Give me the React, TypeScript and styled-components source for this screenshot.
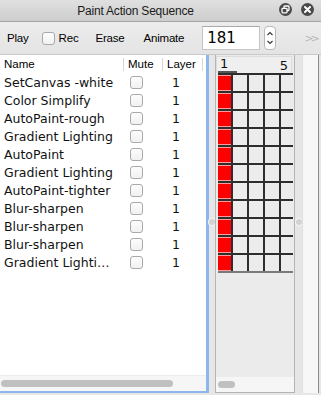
import React from "react";
import styled, { createGlobalStyle } from "styled-components";

const Global = createGlobalStyle`
  html, body { margin: 0; padding: 0; }
  body { font-family: "DejaVu Sans", "Liberation Sans", sans-serif; background: #e8e8e8; }
`;

const Window = styled.div`
  width: 321px;
  height: 395px;
  display: flex;
  flex-direction: column;
  background: #e6e6e6;
  overflow: hidden;
  color: #111;
`;

const TitleBar = styled.div`
  height: 21px;
  flex: none;
  display: flex;
  align-items: center;
  position: relative;
  background: linear-gradient(#e0e0e0, #cdcdcd);
  border-bottom: 1px solid #a5a5a5;
`;

const Title = styled.div`
  flex: 1;
  text-align: center;
  font-family: "Liberation Sans", Arial, sans-serif;
  font-size: 12px;
  letter-spacing: -0.2px;
  color: #1a1a1a;
  padding-right: 50px;
`;

const TitleIcons = styled.div`
  position: absolute;
  right: 7px;
  top: 3px;
  display: flex;
  gap: 9px;
`;

const Toolbar = styled.div`
  height: 32px;
  flex: none;
  display: flex;
  align-items: center;
  padding-left: 7px;
  font-family: "Liberation Sans", Arial, sans-serif;
  font-size: 11.5px;
  letter-spacing: -0.2px;
  color: #000;
  background: linear-gradient(#ececec, #e4e4e4);
  border-bottom: 1px solid #c9c9c9;
`;

const ToolItem = styled.span<{ $ml?: number }>`
  margin-left: ${(p) => p.$ml ?? 0}px;
  white-space: nowrap;
`;

const Check = styled.span<{ $ml?: number }>`
  display: inline-block;
  box-sizing: border-box;
  width: 13px;
  height: 13px;
  margin-left: ${(p) => p.$ml ?? 0}px;
  border: 1px solid #a9a9a9;
  border-radius: 3px;
  background: linear-gradient(#fdfdfd, #f1f1f1);
  flex: none;
`;

const NumberBox = styled.div`
  box-sizing: border-box;
  margin-left: 18px;
  width: 58px;
  height: 24px;
  background: #fff;
  border: 1px solid #c4c4c4;
  border-top-color: #a9a9a9;
  font-family: "DejaVu Sans", sans-serif;
  font-size: 15px;
  letter-spacing: 0;
  padding-left: 4px;
  display: flex;
  align-items: center;
`;

const Stepper = styled.div`
  box-sizing: border-box;
  margin-left: 4px;
  width: 12px;
  height: 24px;
  background: #fff;
  border: 1px solid #b8b8b8;
  border-radius: 4px;
  display: flex;
  align-items: center;
  justify-content: center;
`;

const More = styled.span`
  margin-left: auto;
  margin-right: 4px;
  color: #b8b8b8;
  font-family: "DejaVu Sans", sans-serif;
  font-size: 11px;
  letter-spacing: -3px;
`;

const Main = styled.div`
  flex: 1;
  display: flex;
  padding-bottom: 2px;
  min-height: 0;
`;

const LeftPanel = styled.div`
  width: 206px;
  flex: none;
  display: flex;
  flex-direction: column;
  background: #fff;
  border-right: 3px solid #8db7ea;
  border-bottom: 2px solid #8db7ea;
`;

const TableGrid = styled.div`
  display: grid;
  grid-template-columns: 123px 39px 41px;
  font-size: 12.5px;
`;

const HeadCell = styled.div<{ $divider?: boolean }>`
  height: 18px;
  display: flex;
  align-items: center;
  padding-left: ${(p) => (p.$divider ? 5 : 4)}px;
  font-family: "Liberation Sans", Arial, sans-serif;
  font-size: 11.5px;
  color: #000;
  position: relative;
  &::before {
    content: "";
    display: ${(p) => (p.$divider ? "block" : "none")};
    position: absolute;
    left: 0;
    top: 3px;
    height: 13px;
    width: 1px;
    background: #d6d6d6;
  }
`;

const HeadEnd = styled.div`
  grid-column: 3;
  position: relative;
  &::after {
    content: "";
    position: absolute;
    right: 0;
    top: -15px;
    height: 13px;
    width: 1px;
    background: #d6d6d6;
  }
`;

const Cell = styled.div<{ $pl?: number }>`
  height: 18px;
  display: flex;
  align-items: center;
  padding-left: ${(p) => p.$pl ?? 4}px;
  white-space: nowrap;
  overflow: hidden;
`;

const Spacer = styled.div`
  flex: 1;
`;

const HScroll = styled.div<{ $thumb: number }>`
  height: 15px;
  flex: none;
  background: #f6f6f6;
  border-top: 1px solid #ececec;
  display: flex;
  align-items: center;
  padding-left: ${(p) => (p.$thumb > 100 ? 1 : 2)}px;
`;

const Thumb = styled.div`
  height: 7px;
  border-radius: 4px;
  background: #c0c0c0;
`;

const Splitter = styled.div<{ $w: number }>`
  width: ${(p) => p.$w}px;
  flex: none;
  display: flex;
  align-items: center;
  justify-content: center;
  padding-bottom: 4px;
`;

const Knob = styled.div`
  width: 6px;
  height: 6px;
  border-radius: 50%;
  background: #d2d2d2;
  box-shadow: 0 0 0 1px #f4f4f4;
`;

const RightPanel = styled.div`
  width: 78px;
  flex: none;
  display: flex;
  flex-direction: column;
  background: #ebebeb;
  border-left: 1px solid #b4b4b4;
  border-right: 1px solid #b4b4b4;
  border-bottom: 1px solid #b4b4b4;
`;

const RulerHead = styled.div`
  height: 16px;
  margin: 1px 2px 0 0;
  display: flex;
  justify-content: space-between;
  align-items: flex-end;
  font-size: 13px;
  line-height: 14px;
  padding: 0 3px 0 3px;
  background: #efefef;
  border: 1px solid #dcdcdc;
  border-bottom: none;
`;

const RulerOne = styled.span`
  border-bottom: 2px solid #555;
  padding-right: 9px;
  margin-left: -2px;
  padding-left: 2px;
`;

const Grid = styled.div`
  margin-left: 2px;
  width: 75px;
  display: grid;
  grid-template-columns: 13px 14px 14px 14px 12px;
  grid-auto-rows: 16px;
  gap: 2px;
  padding-top: 2px;
  background: #2e2e2e;
  border-bottom: 2px solid #7a7a7a;
`;

const GridCell = styled.div<{ $on?: boolean }>`
  background: ${(p) => (p.$on ? "#ff0000" : "#ececec")};
  box-shadow: ${(p) => (p.$on ? "inset 0 1px 0 #ff9a9a, inset 0 -1px 0 #ff9a9a" : "none")};
`;

const FarPanel = styled.div`
  width: 15px;
  flex: none;
  background: #f7f7f7;
  border-left: 1px solid #dedede;
  border-right: 1px solid #8a8a8a;
`;

const rows = [
  "SetCanvas -white",
  "Color Simplify",
  "AutoPaint-rough",
  "Gradient Lighting",
  "AutoPaint",
  "Gradient Lighting",
  "AutoPaint-tighter",
  "Blur-sharpen",
  "Blur-sharpen",
  "Blur-sharpen",
  "Gradient Lighti\u2026",
];

const RestoreIcon = () => (
  <svg width="13" height="13" viewBox="0 0 13 13">
    <circle cx="6.5" cy="6.5" r="6.5" fill="#4a4a4a" />
    <rect x="5" y="3" width="5" height="4.5" rx="0.8" fill="none" stroke="#fff" strokeWidth="1.3" />
    <rect x="3" y="5.3" width="5" height="4.5" rx="0.8" fill="#4a4a4a" stroke="#fff" strokeWidth="1.3" />
  </svg>
);

const CloseIcon = () => (
  <svg width="13" height="13" viewBox="0 0 13 13">
    <circle cx="6.5" cy="6.5" r="6.5" fill="#4a4a4a" />
    <path d="M4 4 L9 9 M9 4 L4 9" stroke="#fff" strokeWidth="2" strokeLinecap="round" />
  </svg>
);

const StepIcon = () => (
  <svg width="8" height="18" viewBox="0 0 8 18">
    <path d="M1.5 6 L4 3.5 L6.5 6 M1.5 12 L4 14.5 L6.5 12" fill="none" stroke="#333" strokeWidth="1.1" />
  </svg>
);

export default function App() {
  return (
    <Window>
      <Global />
      <TitleBar>
        <Title>Paint Action Sequence</Title>
        <TitleIcons>
          <RestoreIcon />
          <CloseIcon />
        </TitleIcons>
      </TitleBar>
      <Toolbar>
        <ToolItem>Play</ToolItem>
        <Check $ml={13} />
        <ToolItem $ml={4}>Rec</ToolItem>
        <ToolItem $ml={17}>Erase</ToolItem>
        <ToolItem $ml={19}>Animate</ToolItem>
        <NumberBox>181</NumberBox>
        <Stepper>
          <StepIcon />
        </Stepper>
        <More>&gt;&gt;</More>
      </Toolbar>
      <Main>
        <LeftPanel>
          <TableGrid>
            <HeadCell>Name</HeadCell>
            <HeadCell $divider>Mute</HeadCell>
            <HeadCell $divider>Layer</HeadCell>
            <HeadEnd />
            {rows.map((name, i) => (
              <React.Fragment key={i}>
                <Cell>{name}</Cell>
                <Cell $pl={7}>
                  <Check />
                </Cell>
                <Cell $pl={10}>1</Cell>
              </React.Fragment>
            ))}
          </TableGrid>
          <Spacer />
          <HScroll $thumb={172}>
            <Thumb style={{ width: 172 }} />
          </HScroll>
        </LeftPanel>
        <Splitter $w={6}>
          <Knob />
        </Splitter>
        <RightPanel>
          <RulerHead>
            <RulerOne>1</RulerOne>
            <span>5</span>
          </RulerHead>
          <Grid>
            {rows.map((_, r) =>
              [0, 1, 2, 3, 4].map((c) => <GridCell key={`${r}-${c}`} $on={c === 0} />)
            )}
          </Grid>
          <Spacer />
          <HScroll $thumb={17}>
            <Thumb style={{ width: 17 }} />
          </HScroll>
        </RightPanel>
        <Splitter $w={7}>
          <Knob />
        </Splitter>
        <FarPanel />
      </Main>
    </Window>
  );
}
